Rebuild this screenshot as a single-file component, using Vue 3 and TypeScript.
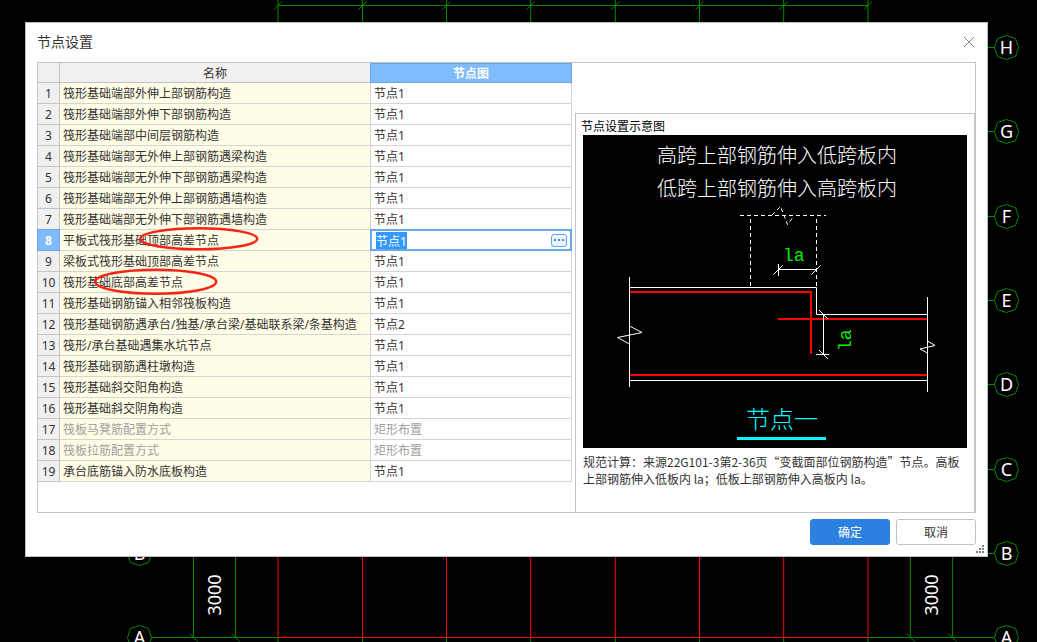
<script setup lang="ts">
import { onMounted, ref } from 'vue'

interface NodeRow {
  name: string
  node: string
  disabled?: boolean
}

const rows = ref<NodeRow[]>([
  { name: '筏形基础端部外伸上部钢筋构造', node: '节点1' },
  { name: '筏形基础端部外伸下部钢筋构造', node: '节点1' },
  { name: '筏形基础端部中间层钢筋构造', node: '节点1' },
  { name: '筏形基础端部无外伸上部钢筋遇梁构造', node: '节点1' },
  { name: '筏形基础端部无外伸下部钢筋遇梁构造', node: '节点1' },
  { name: '筏形基础端部无外伸上部钢筋遇墙构造', node: '节点1' },
  { name: '筏形基础端部无外伸下部钢筋遇墙构造', node: '节点1' },
  { name: '平板式筏形基础顶部高差节点', node: '节点1' },
  { name: '梁板式筏形基础顶部高差节点', node: '节点1' },
  { name: '筏形基础底部高差节点', node: '节点1' },
  { name: '筏形基础钢筋锚入相邻筏板构造', node: '节点1' },
  { name: '筏形基础钢筋遇承台/独基/承台梁/基础联系梁/条基构造', node: '节点2' },
  { name: '筏形/承台基础遇集水坑节点', node: '节点1' },
  { name: '筏形基础钢筋遇柱墩构造', node: '节点1' },
  { name: '筏形基础斜交阳角构造', node: '节点1' },
  { name: '筏形基础斜交阴角构造', node: '节点1' },
  { name: '筏板马凳筋配置方式', node: '矩形布置', disabled: true },
  { name: '筏板拉筋配置方式', node: '矩形布置', disabled: true },
  { name: '承台底筋锚入防水底板构造', node: '节点1' },
])

const activeRow = ref(7)
const editor = ref<HTMLInputElement[]>([])

onMounted(() => {
  const input = editor.value[0]
  input?.focus()
  input?.select()
})

// Axis grid of the model view behind the dialog
const axes = [278, 362.5, 446.5, 530.7, 615.3, 699.5, 783.7, 868]
const sideAxes = [193.5, 235.6, 910.4, 952.4]
const octagon = '0,-12 9,-9 12,0 9,9 0,12 -9,9 -12,0 -9,-9'
const bubbles = [
  { label: 'H', x: 1006, y: 47 },
  { label: 'G', x: 1006, y: 131 },
  { label: 'F', x: 1006, y: 216 },
  { label: 'E', x: 1006, y: 300 },
  { label: 'D', x: 1006, y: 384 },
  { label: 'C', x: 1006, y: 469 },
  { label: 'B', x: 1006, y: 553 },
  { label: 'A', x: 1006, y: 637 },
  { label: 'B', x: 139, y: 553 },
  { label: 'A', x: 139, y: 637 },
]
</script>

<template>
  <main class="workspace">
    <svg class="model" viewBox="0 0 1037 642" preserveAspectRatio="xMidYMid slice" aria-hidden="true">
      <g class="green">
        <path d="M278 5.500H868" />
        <g v-for="x in axes" :key="x">
          <path :d="`M${x} 0V24M${x - 4} 9.500L${x + 4} 1.500`" />
          <path :d="`M${x} 637V642`" />
        </g>
        <path v-for="x in sideAxes" :key="x" :d="`M${x} 550V637M${x - 4} 633.500L${x + 4} 641.500`" />
        <path d="M151 637.500H278M868 637.500H994" />
      </g>
      <g class="red">
        <path v-for="x in axes" :key="x" :d="`M${x} 550V637`" />
        <path d="M278 637.500H868" />
      </g>
      <g v-for="b in bubbles" :key="`${b.label}${b.x}`" :transform="`translate(${b.x + 0.5} ${b.y + 0.5})`">
        <path v-if="b.x > 500" class="green" d="M-20 0H-12" />
        <polygon class="green" :points="octagon" />
        <text class="axis-text" y="6.500">{{ b.label }}</text>
      </g>
      <text class="axis-text" transform="translate(221 595) rotate(-90)">3000</text>
      <text class="axis-text" transform="translate(938 595) rotate(-90)">3000</text>
    </svg>

    <section class="dialog" role="dialog" aria-labelledby="dialog-title">
      <header class="titlebar">
        <h1 id="dialog-title">节点设置</h1>
        <button class="close" type="button" aria-label="关闭">
          <svg width="12" height="12" viewBox="0 0 12 12"><path d="M1 1L11 11M11 1L1 11" /></svg>
        </button>
      </header>

      <div class="frame">
        <div class="table-pane">
          <table>
            <colgroup>
              <col class="col-index" />
              <col />
              <col class="col-node" />
            </colgroup>
            <thead>
              <tr>
                <th class="index"></th>
                <th class="name">名称</th>
                <th class="node current">节点图</th>
              </tr>
            </thead>
            <tbody>
              <tr v-for="(row, i) in rows" :key="row.name" :class="{ disabled: row.disabled }">
                <th class="index" :class="{ current: i === activeRow }" scope="row">{{ i + 1 }}</th>
                <td class="name">{{ row.name }}</td>
                <td v-if="i === activeRow" class="node editing">
                  <div class="editor">
                    <input ref="editor" v-model="row.node" type="text" :aria-label="row.name" />
                    <button type="button" class="more" aria-label="选择节点图">
                      <i></i><i></i><i></i>
                    </button>
                  </div>
                </td>
                <td v-else class="node">{{ row.node }}</td>
              </tr>
            </tbody>
          </table>
          <svg class="marks" width="240" height="250" viewBox="0 0 240 250" aria-hidden="true">
            <ellipse cx="160.700" cy="175.800" rx="58.500" ry="10.500" />
            <ellipse cx="117.700" cy="218.700" rx="60.500" ry="12" />
          </svg>
        </div>

        <section class="preview">
          <h2>节点设置示意图</h2>
          <svg class="diagram" viewBox="0 0 384 313" role="img" aria-label="节点一">
            <rect width="384" height="313" fill="#000" />
            <g class="caption">
              <text x="74" y="28">高跨上部钢筋伸入低跨板内</text>
              <text x="74" y="61">低跨上部钢筋伸入高跨板内</text>
            </g>
            <g class="dashed">
              <path d="M157 80.500H243" />
              <path d="M167.500 84V152" />
              <path d="M233.500 84V152" />
              <path d="M189 80L197.500 71.500L204.500 89.500L211 81" />
            </g>
            <g class="bars">
              <path d="M46 157H228V219" />
              <path d="M195 184H344" />
              <path d="M46 240H344" />
            </g>
            <g class="outline">
              <path d="M46.500 152.500H233.500V179.500H344.500" />
              <path d="M46.500 245.500H344.500" />
              <path d="M46.500 142V252" />
              <path d="M344.500 162V257" />
              <path d="M195.500 129V141M195.500 134.500H233.500M190.500 139.500L199.500 130.500M228.500 139.500L237.500 130.500" />
              <path d="M240.500 179V219.500M233 219.500H246M236 175L245 184M236 215L245 224" />
              <path d="M46.500 191L59 197.500L34.500 202.500L46.500 209" />
              <path d="M344.500 206L352 210.500L337 214L344.500 218" />
            </g>
            <text class="dim" x="200" y="126">la</text>
            <text class="dim" transform="translate(268 216) rotate(-90)">la</text>
            <text class="node-name" x="163" y="293">节点一</text>
            <path class="underline" d="M154 303.500H243" />
          </svg>
          <p>规范计算：来源22G101-3第2-36页“变截面部位钢筋构造”节点。高板上部钢筋伸入低板内 la；低板上部钢筋伸入高板内 la。</p>
        </section>
      </div>

      <footer class="actions">
        <button type="button" class="primary">确定</button>
        <button type="button">取消</button>
      </footer>
      <svg class="grip" width="8" height="8" viewBox="0 0 8 8" aria-hidden="true">
        <path d="M6 0h2v2h-2zM3 3h2v2h-2zM6 3h2v2h-2zM0 6h2v2h-2zM3 6h2v2h-2zM6 6h2v2h-2z" />
      </svg>
    </section>
  </main>
</template>

<style>
body {
  margin: 0;
  background: #000;
}
</style>

<style scoped>
.workspace {
  position: relative;
  box-sizing: border-box;
  min-height: 100vh;
  padding: 22px 49px 24px 25px;
  overflow: hidden;
  background: #000;
  color: #333;
  font: 12px/20px "Noto Sans", "Noto Sans CJK SC", sans-serif;
}

.model {
  position: absolute;
  inset: 0;
  width: 100%;
  height: 100%;
}

.green,
.red {
  fill: none;
  stroke: #008a00;
}

.red {
  stroke: #f00;
}

.axis-text {
  fill: #fff;
  font-size: 18px;
  text-anchor: middle;
}

.dialog {
  position: relative;
  padding: 0 11px 11px;
  border: 1px solid #bfbfbf;
  background: #fff;
}

.titlebar {
  display: flex;
  align-items: center;
  justify-content: space-between;
  box-sizing: border-box;
  height: 39px;
  padding: 0 1px 2px 0;
}

h1,
h2 {
  margin: 0;
  font-weight: 400;
}

h1 {
  font-size: 14px;
}

button {
  box-sizing: border-box;
  padding: 0;
  font: inherit;
}

.close {
  display: flex;
  border: 0;
  background: none;
}

.close path {
  fill: none;
  stroke: #888;
}

.frame {
  display: grid;
  grid-template-columns: minmax(0, 534fr) minmax(0, 400fr);
  gap: 3px;
  border: 1px solid #c3c3c3;
}

.table-pane {
  position: relative;
  padding-bottom: 30px;
}

table {
  width: 100%;
  table-layout: fixed;
  border-spacing: 0;
}

.col-index {
  width: 22px;
}

.col-node {
  width: 201px;
}

th,
td {
  position: relative;
  box-sizing: border-box;
  height: 21px;
  padding: 2px 3px 0;
  border: solid #d4d4d4;
  border-width: 0 1px 1px 0;
  line-height: 18px;
  text-align: left;
  white-space: nowrap;
}

th {
  padding: 2px 0 0;
  border-color: #c3c3c3;
  background: #f0f0f0;
  font-weight: 400;
  text-align: center;
}

thead th {
  height: 20px;
  line-height: 17px;
}

td.name {
  background: #fffde6;
}

th.current {
  background: #80bbfc;
  color: #fff;
  font-weight: 700;
}

th.current::after,
.editing::after {
  position: absolute;
  inset: -1px;
  border: 1px solid #68a8ea;
  content: "";
  pointer-events: none;
}

thead th.current::after {
  top: 0;
}

td.editing {
  padding: 0 4px 0 3px;
}

.editing::after {
  border-width: 2px;
}

.disabled td {
  color: #a0a0a0;
}

.editor {
  display: flex;
  align-items: center;
  height: 20px;
}

input {
  flex: 1;
  min-width: 0;
  height: 18px;
  padding: 2px 2px 0;
  box-sizing: border-box;
  border: 0;
  outline: 0;
  background: #fff;
  color: #333;
  font: inherit;
  line-height: 16px;
}

input::selection {
  background: #39f;
  color: #fff;
}

.more {
  display: flex;
  align-items: center;
  justify-content: center;
  gap: 2px;
  width: 16px;
  height: 13px;
  border: 1px solid #62a6ea;
  border-radius: 3px;
  background: #edf4fc;
}

.more i {
  width: 2px;
  height: 2px;
  background: #3f8fe8;
}

.marks {
  position: absolute;
  top: 0;
  left: 0;
  pointer-events: none;
}

.marks ellipse {
  fill: none;
  stroke: #fb2414;
  stroke-width: 2.5;
}

.preview {
  margin-top: 50px;
  padding: 4px 7px 0;
  border: solid #c3c3c3;
  border-width: 1px 1px 0;
}

h2 {
  margin-left: -2px;
  color: #000;
  font-size: 12px;
  line-height: 17px;
}

.diagram {
  display: block;
  width: 100%;
}

.caption text {
  fill: #fff;
  font: 300 20px "Noto Sans CJK SC", sans-serif;
}

.outline,
.dashed,
.bars {
  fill: none;
  stroke: #fff;
}

.dashed {
  stroke-dasharray: 4 3;
}

.bars {
  stroke: #f00;
  stroke-width: 2;
}

.dim {
  fill: #0e0;
  font: 18px "Liberation Mono", monospace;
}

.node-name {
  fill: #0ff;
  font: 300 24px "Noto Sans CJK SC", sans-serif;
}

.underline {
  stroke: #0ff;
  stroke-width: 3;
}

p {
  margin: 5px 0 0;
  font-family: "Noto Sans CJK SC", sans-serif;
  line-height: 17px;
}

.actions {
  display: flex;
  justify-content: flex-end;
  gap: 6px;
  margin-top: 6px;
}

.actions button {
  width: 80px;
  height: 26px;
  padding-top: 2px;
  border: 1px solid #c3c3c3;
  border-radius: 3px;
  background: #fff;
  color: #333;
}

.actions .primary {
  border-color: #2c80e0;
  background: #2c80e0;
  color: #fff;
}

.grip {
  position: absolute;
  right: 3px;
  bottom: 3px;
  fill: #808080;
}
</style>
